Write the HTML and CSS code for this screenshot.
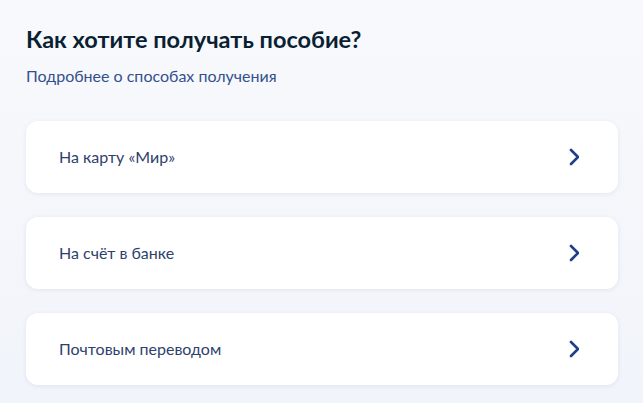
FILE: index.html
```html
<!DOCTYPE html>
<html lang="ru">
<head>
<meta charset="utf-8">
<title>Способ получения пособия</title>
<link rel="stylesheet" href="styles.css">
</head>
<body>
<main class="page">
  <h1 class="title">Как хотите получать пособие?</h1>
  <a class="more" href="#">Подробнее о способах получения</a>
  <ul class="options">
    <li class="option">
      <span class="option-label">На карту «Мир»</span>
      <svg class="chevron" viewBox="0 0 10 18" width="10" height="18" aria-hidden="true"><path d="M2 2l7 7-7 7" fill="none" stroke="currentColor" stroke-width="2.6" stroke-linecap="round" stroke-linejoin="round"/></svg>
    </li>
    <li class="option">
      <span class="option-label">На счёт в банке</span>
      <svg class="chevron" viewBox="0 0 10 18" width="10" height="18" aria-hidden="true"><path d="M2 2l7 7-7 7" fill="none" stroke="currentColor" stroke-width="2.6" stroke-linecap="round" stroke-linejoin="round"/></svg>
    </li>
    <li class="option">
      <span class="option-label">Почтовым переводом</span>
      <svg class="chevron" viewBox="0 0 10 18" width="10" height="18" aria-hidden="true"><path d="M2 2l7 7-7 7" fill="none" stroke="currentColor" stroke-width="2.6" stroke-linecap="round" stroke-linejoin="round"/></svg>
    </li>
  </ul>
</main>
</body>
</html>
```
FILE: styles.css
```css
html, body {
  margin: 0;
  padding: 0;
}

body {
  width: 643px;
  height: 403px;
  overflow: hidden;
  background: linear-gradient(180deg, #f8f9fc 0%, #f1f4fa 100%);
  font-family: Lato, "Noto Sans", sans-serif;
}

.page {
  padding: 23px 25px 0 26px;
}

.title {
  margin: 0;
  font-size: 23.5px;
  line-height: 32px;
  font-weight: 700;
  color: #0b1f33;
}

.more {
  display: block;
  margin-top: 11px;
  font-size: 16px;
  line-height: 20px;
  color: #34508c;
  text-decoration: none;
}

.options {
  list-style: none;
  margin: 35px 0 0;
  padding: 0;
  display: flex;
  flex-direction: column;
  gap: 24px;
}

.option {
  height: 72px;
  box-sizing: border-box;
  padding: 0 39px 0 33px;
  display: flex;
  align-items: center;
  justify-content: space-between;
  background: #fff;
  border-radius: 12px;
  box-shadow: 0 1px 5px rgba(40, 70, 140, 0.09);
}

.option-label {
  font-size: 16px;
  line-height: 20px;
  color: #2f3f6d;
}

.chevron {
  color: #1e3e8e;
  display: block;
}
```
